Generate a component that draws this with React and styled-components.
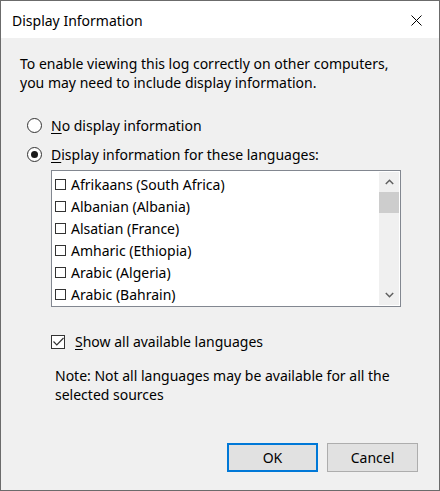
import React from 'react'
import styled, { createGlobalStyle } from 'styled-components'

const GlobalStyle = createGlobalStyle`
  html, body {
    margin: 0;
    padding: 0;
    background: #f0f0f0;
  }
  * {
    box-sizing: border-box;
  }
`

const languages = [
  'Afrikaans (South Africa)',
  'Albanian (Albania)',
  'Alsatian (France)',
  'Amharic (Ethiopia)',
  'Arabic (Algeria)',
  'Arabic (Bahrain)',
]

const App = () => {
  return (
    <>
      <GlobalStyle />
      <Window>
        <TitleBar>
          <Title>Display Information</Title>
          <CloseButton>
            <svg width="11" height="11" viewBox="0 0 11 11">
              <path d="M0.5 0.5 L10.5 10.5 M10.5 0.5 L0.5 10.5" stroke="#000" strokeWidth="1" />
            </svg>
          </CloseButton>
        </TitleBar>
        <Body>
          <Intro>
            To enable viewing this log correctly on other computers,
            <br />
            you may need to include display information.
          </Intro>
          <Options>
            <RadioRow>
              <Radio />
              <Label><u>N</u>o display information</Label>
            </RadioRow>
            <RadioRow>
              <Radio checked />
              <Label><u>D</u>isplay information for these languages:</Label>
            </RadioRow>
          </Options>
          <ListBox>
            <Items>
              {languages.map((lang) => (
                <Item key={lang}>
                  <SmallBox />
                  <ItemText>{lang}</ItemText>
                </Item>
              ))}
            </Items>
            <ScrollBar>
              <Arrow>
                <svg width="9" height="6" viewBox="0 0 9 6">
                  <path d="M0.8 5 L4.5 1.3 L8.2 5" stroke="#606060" strokeWidth="1.5" fill="none" />
                </svg>
              </Arrow>
              <Track>
                <Thumb />
              </Track>
              <Arrow>
                <svg width="9" height="6" viewBox="0 0 9 6">
                  <path d="M0.8 1 L4.5 4.7 L8.2 1" stroke="#606060" strokeWidth="1.5" fill="none" />
                </svg>
              </Arrow>
            </ScrollBar>
          </ListBox>
          <CheckRow>
            <CheckBox>
              <svg width="11" height="9" viewBox="0 0 11 9">
                <path d="M0.5 4.5 L3.8 7.8 L10.5 1" stroke="#333" strokeWidth="1.2" fill="none" />
              </svg>
            </CheckBox>
            <Label><u>S</u>how all available languages</Label>
          </CheckRow>
          <Note>
            Note: Not all languages may be available for all the
            <br />
            selected sources
          </Note>
          <Footer>
            <Button primary>OK</Button>
            <Button>Cancel</Button>
          </Footer>
        </Body>
      </Window>
    </>
  )
}

const Window = styled.div`
  width: 440px;
  height: 491px;
  border: 1px solid #6b6b6b;
  background: #f0f0f0;
  display: flex;
  flex-direction: column;
  font-family: 'Noto Sans', 'Open Sans', sans-serif;
  color: #000;
`

const TitleBar = styled.div`
  height: 37px;
  background: #fff;
  display: flex;
  align-items: center;
  justify-content: space-between;
  padding: 0 12px 0 11px;
`

const Title = styled.div`
  font-size: 14px;
  margin-top: 1px;
`

const CloseButton = styled.div`
  width: 22px;
  display: flex;
  justify-content: center;
  align-items: center;
  margin-top: 2px;
`

const Body = styled.div`
  flex: 1;
  display: flex;
  flex-direction: column;
  padding: 16px 21px 0 19px;
  font-size: 14px;
`

const Intro = styled.div`
  line-height: 19px;
`

const Options = styled.div`
  display: flex;
  flex-direction: column;
  gap: 10px;
  margin-top: 24px;
  padding-left: 7px;
`

const RadioRow = styled.div`
  display: flex;
  align-items: center;
  gap: 9px;
  height: 19px;
`

const Radio = styled.span`
  width: 15px;
  height: 15px;
  border-radius: 50%;
  border: 1px solid #333;
  background: #fff;
  position: relative;
  flex: none;
  &::after {
    content: '';
    display: ${(p) => (p.checked ? 'block' : 'none')};
    position: absolute;
    left: 3px;
    top: 3px;
    width: 7px;
    height: 7px;
    border-radius: 50%;
    background: #1a1a1a;
  }
`

const Label = styled.span`
  line-height: 19px;
  white-space: nowrap;
  u {
    text-decoration-thickness: 1px;
    text-underline-offset: 2px;
  }
`

const ListBox = styled.div`
  margin: 6px 0 0 31px;
  width: 350px;
  height: 137px;
  border: 1px solid #828790;
  background: #fff;
  display: flex;
`

const Items = styled.div`
  flex: 1;
  padding-top: 2px;
  overflow: hidden;
`

const Item = styled.div`
  height: 22px;
  display: flex;
  align-items: center;
  padding-left: 3px;
`

const SmallBox = styled.span`
  width: 11px;
  height: 11px;
  border: 1px solid #333;
  margin-right: 5px;
  flex: none;
`

const ItemText = styled.span`
  white-space: nowrap;
`

const ScrollBar = styled.div`
  width: 20px;
  margin: 1px 1px 1px 0;
  background: #f0f0f0;
  display: flex;
  flex-direction: column;
`

const Arrow = styled.div`
  height: 20px;
  display: flex;
  align-items: center;
  justify-content: center;
`

const Track = styled.div`
  flex: 1;
`

const Thumb = styled.div`
  height: 21px;
  background: #cdcdcd;
`

const CheckRow = styled.div`
  display: flex;
  align-items: center;
  gap: 10px;
  margin: 25px 0 0 31px;
`

const CheckBox = styled.span`
  width: 14px;
  height: 14px;
  border: 1px solid #333;
  background: #fff;
  display: flex;
  align-items: center;
  justify-content: center;
  flex: none;
`

const Note = styled.div`
  margin: 15px 0 0 35px;
  line-height: 19px;
`

const Footer = styled.div`
  display: flex;
  justify-content: flex-end;
  gap: 9px;
  margin-top: 39px;
`

const Button = styled.div`
  width: 91px;
  height: 29px;
  display: flex;
  align-items: center;
  justify-content: center;
  background: #e1e1e1;
  border: ${(p) => (p.primary ? '2px solid #0078d7' : '1px solid #adadad')};
  font-size: 14px;
`

export default App
